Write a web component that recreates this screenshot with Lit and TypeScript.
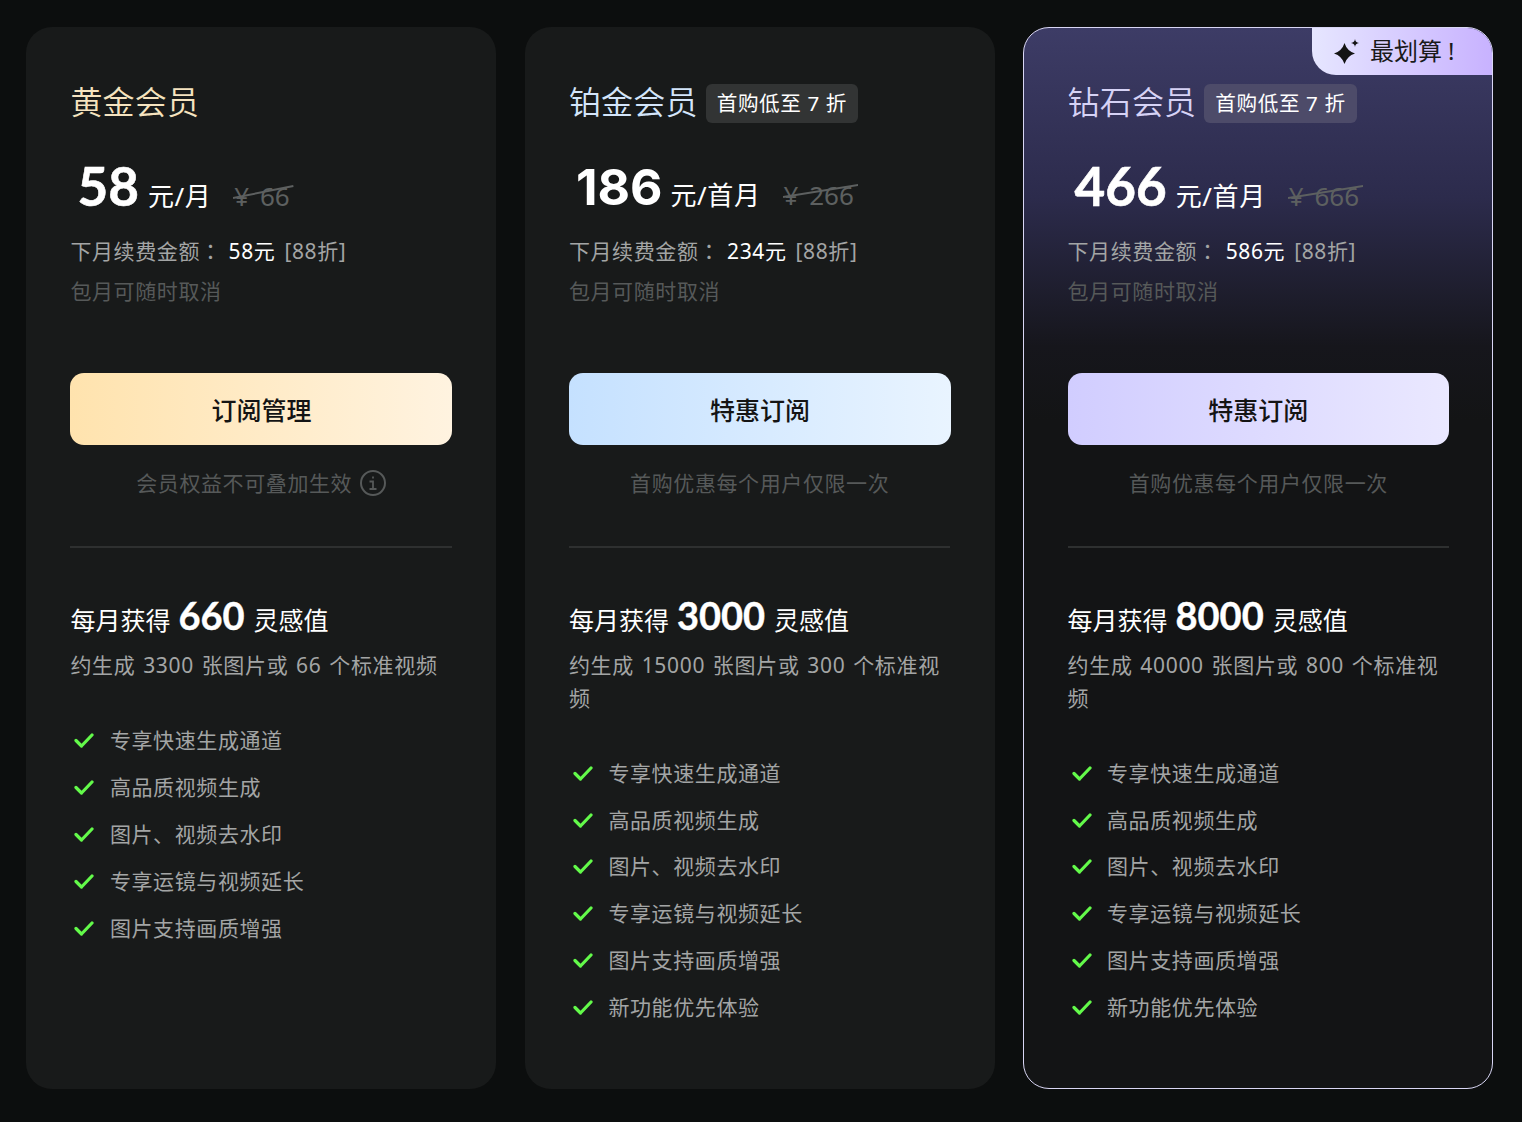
import { LitElement, html, css, nothing } from "lit";
import { customElement } from "lit/decorators.js";

interface Plan {
  name: string; cls: string; tag?: boolean; price: string; unit: string; old: string; numCls?: string;
  next: string; btn: string; note: string; info?: boolean; credits: string; desc: string; feats: string[]; best?: boolean;
}
const base = ["专享快速生成通道", "高品质视频生成", "图片、视频去水印", "专享运镜与视频延长", "图片支持画质增强"];
const plans: Plan[] = [
  { name: "黄金会员", cls: "gold", price: "58", unit: "元/月", old: "66", next: "58元", btn: "订阅管理", note: "会员权益不可叠加生效", info: true, credits: "660", desc: "约生成 3300 张图片或 66 个标准视频", feats: base },
  { name: "铂金会员", cls: "plat", tag: true, price: "186", numCls: "alt", unit: "元/首月", old: "266", next: "234元", btn: "特惠订阅", note: "首购优惠每个用户仅限一次", credits: "3000", desc: "约生成 15000 张图片或 300 个标准视频", feats: [...base, "新功能优先体验"] },
  { name: "钻石会员", cls: "dia", tag: true, price: "466", unit: "元/首月", old: "666", next: "586元", btn: "特惠订阅", note: "首购优惠每个用户仅限一次", credits: "8000", desc: "约生成 40000 张图片或 800 个标准视频", feats: [...base, "新功能优先体验"], best: true },
];

@customElement("app-root")
export class AppRoot extends LitElement {
  static styles = css`
    :host { display: block; width: 1522px; height: 1122px; background: #0c0e0e; overflow: hidden;
      font-family: "Noto Sans", "Noto Sans CJK SC", sans-serif; }
    * { box-sizing: border-box; }
    .grid { display: grid; grid-template-columns: repeat(3, 470px); column-gap: 28.5px; padding: 27px 0 0 26px; }
    .card { position: relative; height: 1062px; border-radius: 26px; background: #181a1a; padding: 55px 44px 0 44.4px; overflow: hidden; }
    .card.dia { background: linear-gradient(180deg, #3d3c66 0%, #2c2b4c 16%, #16161c 30%, #131415 37%, #131415 100%); border: 1px solid #d9d6f4; padding: 54px 43px 0 43.5px; }
    .best { position: absolute; top: 0; right: 0; width: 180px; height: 47px; border-radius: 0 0 0 24px;
      background: linear-gradient(90deg, #e6e6ff 0%, #c8b2ff 100%); display: flex; align-items: center; padding-left: 22px; gap: 10px;
      font-size: 24px; color: #1a1a1a; }
    .best span { position: relative; top: -2px; }
    .best i { font-style: normal; margin-left: 6px; }
    .head { display: flex; align-items: center; height: 42px; gap: 8px; }
    .name { font-size: 32px; line-height: 42px; font-weight: 350; letter-spacing: 0.2px; padding-bottom: 2px; }
    .gold .name { color: #f5e3bf; }
    .plat .name { color: #d3e5fa; }
    .dia .name { color: #d6d2f5; }
    .tag { height: 39px; line-height: 39px; padding: 0 11px; border-radius: 6px; font-size: 20.6px; letter-spacing: 0.6px; color: #fff; background: #323434; white-space: nowrap; }
    .dia .tag { background: #4d4b69; }
    .price { display: flex; align-items: baseline; margin-top: 31px; padding-left: 7px; height: 62px; color: #fff; }
    .num { font-family: "Lato", sans-serif; font-size: 53px; font-weight: 700; line-height: 62px; margin-right: 9px; -webkit-text-stroke: 0.6px #fff; }
    .num.alt { font-family: "Inter", sans-serif; font-size: 50px; line-height: 64px; margin-right: 8px; -webkit-text-stroke: 0; }
    .unit { font-size: 26px; letter-spacing: 0.6px; }
    .old { position: relative; margin-left: 23px; font-size: 26px; color: #5d6060; white-space: nowrap; word-spacing: 4px; }
    .old svg { position: absolute; left: -1px; right: -4px; top: 7px; width: calc(100% + 5px); height: 14px; }
    .line { font-size: 21px; letter-spacing: 0.6px; word-spacing: 1px; line-height: 40px; color: #a3a5a5; white-space: nowrap; }
    .next { margin-top: 13px; padding-top: 1px; height: 41px; line-height: 39px; word-spacing: 3px; }
    .colon { font-family: "Noto Sans CJK TC", sans-serif; }
    .next b { font-weight: 400; color: #fff; margin-left: 7px; }
    .cancel { color: #565959; }
    .btn { margin-top: 62px; height: 72px; width: 382px; border-radius: 14px; display: flex; align-items: center; justify-content: center;
      font-size: 25px; font-weight: 500; color: #141414; }
    .gold .btn { background: linear-gradient(90deg, #ffe3ae 0%, #fff3e0 100%); }
    .plat .btn { background: linear-gradient(90deg, #c5e1ff 0%, #e9f4ff 100%); }
    .dia .btn { width: 381.5px; background: linear-gradient(90deg, #d1cdff 0%, #eae8ff 100%); }
    .note { margin-top: 15px; height: 44px; display: flex; align-items: center; justify-content: center; gap: 8px; font-size: 21px; letter-spacing: 0.6px; color: #565959; width: 381.6px; white-space: nowrap; }
    .note svg { position: relative; top: 1px; }
    .rule { height: 2px; background: #2e3030; margin-top: 42px; width: 381.6px; }
    .credits { margin-top: 40px; height: 54px; display: flex; align-items: baseline; color: #fff; font-size: 25px; white-space: pre; }
    .credits b { font-family: "Lato", sans-serif; font-size: 38px; font-weight: 700; margin: 0 9px 0 8px; line-height: 54px; -webkit-text-stroke: 0.4px #fff; }
    .desc { font-size: 21px; letter-spacing: 0.7px; word-spacing: 1.5px; line-height: 32.5px; color: #a3a5a5; margin-top: 7px; width: 381.6px; }
    ul { list-style: none; margin: 34.5px 0 0; padding: 0; }
    li { display: flex; align-items: center; height: 46.8px; font-size: 21px; letter-spacing: 0.6px; color: #a3a5a5; gap: 15.5px; white-space: nowrap; }
    li svg { width: 24px; height: 24px; flex: none; margin-top: 2px; }
  `;

  private check() {
    return html`<svg viewBox="0 0 24 24" fill="none"><path d="M6 12.500l5.500 5.500L22 7" stroke="#63fa4a" stroke-width="3.200" stroke-linecap="round" stroke-linejoin="round"/></svg>`;
  }

  private info() {
    return html`<svg width="26" height="26" viewBox="0 0 26 26" fill="none" stroke="#565959" stroke-width="2"><circle cx="13" cy="13" r="12"/><path d="M9.500 11.500h3.500v7.500M9.500 19h7M13 6.500v2" stroke-width="1.800"/></svg>`;
  }

  private spark() {
    return html`<svg width="26" height="26" viewBox="0 0 26 26" fill="#141414"><path d="M10.500 4Q13 12 21 14.500 13 17 10.500 25 8 17 0 14.500 8 12 10.500 4z"/><path d="M21 0c.5 2.700 1.300 3.500 4 4-2.700.5-3.500 1.300-4 4-.5-2.700-1.300-3.500-4-4 2.700-.5 3.500-1.300 4-4z"/></svg>`;
  }

  render() {
    return html`<div class="grid">${plans.map((p) => html`
      <section class="card ${p.cls}">
        ${p.best ? html`<div class="best">${this.spark()}<span>最划算<i>!</i></span></div>` : nothing}
        <div class="head"><span class="name">${p.name}</span>${p.tag ? html`<span class="tag">首购低至 7 折</span>` : nothing}</div>
        <div class="price"><span class="num ${p.numCls ?? ""}">${p.price}</span><span class="unit">${p.unit}</span>
          <span class="old">¥ ${p.old}<svg viewBox="0 0 100 14" preserveAspectRatio="none"><path d="M0 13L100 1" stroke="#5d6060" stroke-width="2" vector-effect="non-scaling-stroke"/></svg></span></div>
        <div class="line next">下月续费金额<span class="colon">：</span><b>${p.next}</b> [88折]</div>
        <div class="line cancel">包月可随时取消</div>
        <div class="btn">${p.btn}</div>
        <div class="note"><span>${p.note}</span>${p.info ? this.info() : nothing}</div>
        <div class="rule"></div>
        <div class="credits">每月获得<b>${p.credits}</b>灵感值</div>
        <div class="desc">${p.desc}</div>
        <ul>${p.feats.map((f) => html`<li>${this.check()}<span>${f}</span></li>`)}</ul>
      </section>`)}</div>`;
  }
}
